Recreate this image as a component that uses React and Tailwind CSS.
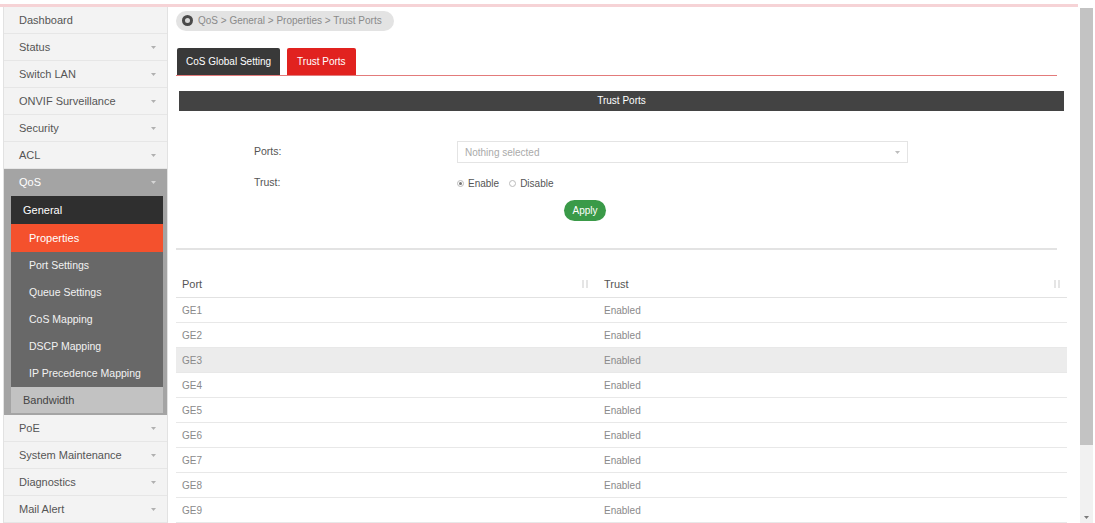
import React from "react";

const topItems = ["Dashboard", "Status", "Switch LAN", "ONVIF Surveillance", "Security", "ACL"];
const bottomItems = ["PoE", "System Maintenance", "Diagnostics", "Mail Alert"];
const qosChildren = ["Port Settings", "Queue Settings", "CoS Mapping", "DSCP Mapping", "IP Precedence Mapping"];
const ports = ["GE1", "GE2", "GE3", "GE4", "GE5", "GE6", "GE7", "GE8", "GE9"];

function Caret({ color = "#b0b0b0" }) {
  return (
    <svg width="5" height="3" viewBox="0 0 5 3" className="shrink-0">
      <path d="M0 0 L5 0 L2.5 3 Z" fill={color} />
    </svg>
  );
}

function SortIcon() {
  return (
    <svg width="8" height="10" viewBox="0 0 8 10" className="shrink-0">
      <path d="M2 1 V9 M6 1 V9" stroke="#d4d4d4" strokeWidth="1.2" />
    </svg>
  );
}

function SideItem({ label, caret = true }) {
  return (
    <div className="h-[27px] flex items-center justify-between pl-[15px] pr-[11px] bg-[#f3f3f3] border-b border-[#e6e6e6] text-[#555]">
      <span>{label}</span>
      {caret && <Caret />}
    </div>
  );
}

export default function App() {
  return (
    <div className="w-[1095px] h-[523px] bg-white flex overflow-hidden text-[11px]" style={{ fontFamily: '"Liberation Sans", Arial, sans-serif' }}>
      <div className="w-[1078px] flex flex-col">
        {/* top strip */}
        <div className="h-[7px] border-b-[3px] border-[#f6d3d6] shrink-0" />

        <div className="flex flex-1 min-h-0">
          {/* Sidebar */}
          <div className="w-[168px] pl-[3px] shrink-0">
            <div className="border-x border-[#e2e2e2] h-full">
              {topItems.map((t, i) => (
                <SideItem key={t} label={t} caret={i !== 0} />
              ))}

              {/* QoS group */}
              <div className="bg-[#a4a4a4] pb-[2px]">
                <div className="h-[27px] flex items-center justify-between pl-[15px] pr-[11px] text-white">
                  <span>QoS</span>
                  <Caret color="#d6d6d6" />
                </div>
                <div className="ml-[7px] mr-[4px] bg-[#686868]">
                  <div className="h-[28px] flex items-center pl-[12px] bg-[#2f2f2f] text-white">General</div>
                  <div className="h-[28px] flex items-center pl-[18px] bg-[#f4512d] text-white">Properties</div>
                  {qosChildren.map((c) => (
                    <div key={c} className="h-[27px] flex items-center pl-[18px] text-[#f2f2f2] text-[10.5px]">
                      {c}
                    </div>
                  ))}
                  <div className="h-[26px] flex items-center pl-[12px] bg-[#c2c2c2] text-[#444]">Bandwidth</div>
                </div>
              </div>

              {bottomItems.map((t) => (
                <SideItem key={t} label={t} />
              ))}
            </div>
          </div>

          {/* Main */}
          <div className="flex-1 pl-[8px] pr-[11px] pt-[4px] flex flex-col">
            {/* breadcrumb */}
            <div className="self-start h-[20px] flex items-center gap-[5px] pl-[6px] pr-[12px] bg-[#e3e3e3] rounded-full text-[10px] text-[#8a8a8a]">
              <span className="w-[11px] h-[11px] rounded-full bg-[#4a4a4a] flex items-center justify-center">
                <span className="w-[5px] h-[5px] rounded-full bg-[#d8d8d8]" />
              </span>
              <span>QoS &gt; General &gt; Properties &gt; Trust Ports</span>
            </div>

            {/* tabs */}
            <div className="mt-[17px] flex gap-[7px] border-b border-[#e37b7b] pl-[1px] mr-[10px]">
              <div className="h-[27px] px-[9px] flex items-center bg-[#393939] text-white text-[10px] rounded-t-[2px]">CoS Global Setting</div>
              <div className="h-[27px] px-[10px] flex items-center bg-[#e1221f] text-white text-[10px] rounded-t-[2px]">Trust Ports</div>
            </div>

            {/* header bar */}
            <div className="mt-[15px] mx-[3px] h-[21px] bg-[#434343] flex items-center justify-center text-white text-[10px]">
              Trust Ports
            </div>

            {/* form */}
            <div className="mt-[30px] pl-[78px]">
              <div className="flex items-center">
                <div className="w-[203px] text-[#555] text-[10.5px]">Ports:</div>
                <div className="w-[451px] h-[22px] border border-[#e4e4e4] flex items-center justify-between px-[7px] text-[#aaa] text-[10px]">
                  <span>Nothing selected</span>
                  <Caret color="#bdbdbd" />
                </div>
              </div>
              <div className="flex items-center mt-[12px]">
                <div className="w-[203px] text-[#555] text-[10.5px]">Trust:</div>
                <div className="flex items-center gap-[4px] text-[10px] text-[#555]">
                  <span className="w-[7px] h-[7px] rounded-full border border-[#bbb] flex items-center justify-center">
                    <span className="w-[3px] h-[3px] rounded-full bg-[#777]" />
                  </span>
                  <span className="mr-[6px]">Enable</span>
                  <span className="w-[7px] h-[7px] rounded-full border border-[#bbb]" />
                  <span>Disable</span>
                </div>
              </div>
              <div className="w-[662px] flex justify-center mt-[9px]">
                <button className="h-[21px] w-[42px] rounded-full bg-[#3a9a48] text-white text-[10px]">Apply</button>
              </div>
            </div>

            {/* separator */}
            <div className="mt-[27px] h-[2px] bg-[#e3e3e3] mr-[10px]" />

            {/* table */}
            <div className="mt-[21px]">
              <div className="h-[27px] flex items-center border-b border-[#e2e2e2] text-[#555]">
                <div className="w-[419px] pl-[6px] pr-[6px] flex items-center justify-between">
                  <span>Port</span>
                  <SortIcon />
                </div>
                <div className="flex-1 pl-[9px] pr-[6px] flex items-center justify-between">
                  <span>Trust</span>
                  <SortIcon />
                </div>
              </div>
              {ports.map((p) => (
                <div
                  key={p}
                  className={`h-[25px] flex items-center border-b border-[#e8e8e8] text-[10px] text-[#8a8a8a] ${p === "GE3" ? "bg-[#ececec]" : ""}`}
                >
                  <div className="w-[419px] pl-[6px]">{p}</div>
                  <div className="flex-1 pl-[9px]">Enabled</div>
                </div>
              ))}
            </div>
          </div>
        </div>
      </div>

      {/* scrollbar */}
      <div className="w-[17px] pt-[8px] flex flex-col items-start">
        <div className="w-[13px] ml-[2px] flex-1 bg-[#f1f1f1] flex flex-col">
          <div className="h-[437px] bg-[#c3c3c3]" />
          <div className="flex-1" />
          <div className="h-[12px] flex items-center justify-center">
            <Caret color="#7a7a7a" />
          </div>
        </div>
      </div>
    </div>
  );
}
